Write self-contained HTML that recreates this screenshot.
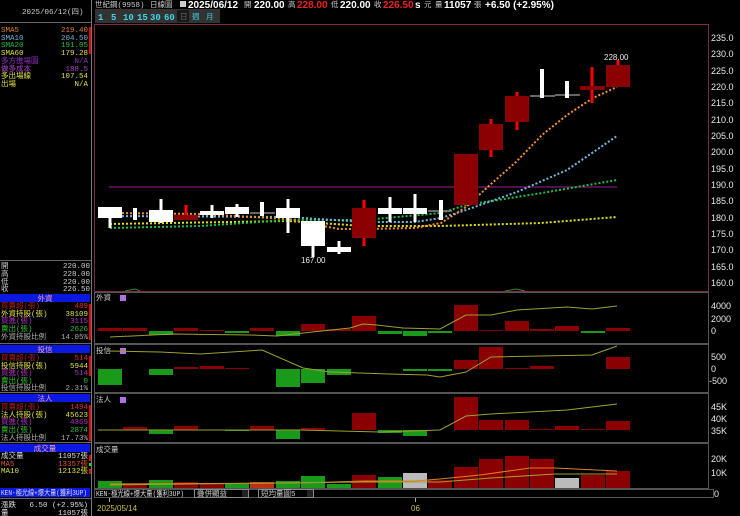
<!DOCTYPE html>
<html><head><meta charset="utf-8"><style>
html,body{margin:0;padding:0;background:#000;width:740px;height:516px;overflow:hidden}
svg{display:block}
text{font-family:"Liberation Mono","Noto Sans CJK TC",monospace;font-size:7.5px}
.b{font-family:"Liberation Sans","Noto Sans CJK TC",sans-serif;font-weight:bold;font-size:10px}
.ax{font-family:"Liberation Sans",sans-serif;font-size:9px;fill:#e8e8e8}
</style></head><body>
<svg width="740" height="516" viewBox="0 0 740 516" xmlns="http://www.w3.org/2000/svg">
<line x1="91.5" y1="0" x2="91.5" y2="516" stroke="#777"/>
<line x1="0" y1="22.5" x2="91" y2="22.5" stroke="#666"/>
<text x="22" y="14" fill="#ccc">2025/06/12(四)</text>
<g>
<text x="1" y="32" fill="#e08030">SMA5</text><text x="88" y="32" fill="#e08030" text-anchor="end">219.40</text>
<text x="1" y="40" fill="#70b8e0">SMA10</text><text x="88" y="40" fill="#70b8e0" text-anchor="end">204.50</text>
<text x="1" y="47" fill="#20c040">SMA20</text><text x="88" y="47" fill="#20c040" text-anchor="end">191.05</text>
<text x="1" y="55" fill="#e0e040">SMA60</text><text x="88" y="55" fill="#e0e040" text-anchor="end">179.28</text>
<text x="1" y="63" fill="#9030c0">多方進場圖</text><text x="88" y="63" fill="#9030c0" text-anchor="end">N/A</text>
<text x="1" y="71" fill="#b040d0">做多成本</text><text x="88" y="71" fill="#b040d0" text-anchor="end">188.5</text>
<text x="1" y="78" fill="#e0e040">多出場線</text><text x="88" y="78" fill="#e0e040" text-anchor="end">107.54</text>
<text x="1" y="86" fill="#e0e040">出場</text><text x="88" y="86" fill="#e0e040" text-anchor="end">N/A</text>
<rect x="89" y="27" width="2" height="27" fill="#e00"/>
</g>
<line x1="0" y1="260.5" x2="91" y2="260.5" stroke="#666"/>
<text x="1" y="268" fill="#ccc">開</text><text x="90" y="268" fill="#ccc" text-anchor="end">220.00</text>
<text x="1" y="276" fill="#ccc">高</text><text x="90" y="276" fill="#ccc" text-anchor="end">228.00</text>
<text x="1" y="284" fill="#ccc">低</text><text x="90" y="284" fill="#ccc" text-anchor="end">220.00</text>
<text x="1" y="291" fill="#ccc">收</text><text x="90" y="291" fill="#ccc" text-anchor="end">226.50</text>
<rect x="0" y="294" width="90" height="8" fill="#0a18e0"/><text x="45" y="301" fill="#f0a0a0" text-anchor="middle">外資</text>
<text x="1" y="308" fill="#b02020">買賣超(張)</text><text x="88" y="308" fill="#e03030" text-anchor="end">489</text>
<text x="1" y="316" fill="#e0e040">外資持股(張)</text><text x="88" y="316" fill="#e0e040" text-anchor="end">38109</text>
<text x="1" y="323" fill="#b030c0">買進(張)</text><text x="88" y="323" fill="#b030c0" text-anchor="end">3115</text>
<text x="1" y="331" fill="#30c030">賣出(張)</text><text x="88" y="331" fill="#30c030" text-anchor="end">2626</text>
<text x="1" y="339" fill="#aaa">外資持股比例</text><text x="88" y="339" fill="#aaa" text-anchor="end">14.05%</text>
<line x1="0" y1="343.5" x2="91" y2="343.5" stroke="#666"/>
<rect x="0" y="345" width="90" height="8" fill="#0a18e0"/><text x="45" y="352" fill="#f0a0a0" text-anchor="middle">投信</text>
<text x="1" y="360" fill="#b02020">買賣超(張)</text><text x="88" y="360" fill="#e03030" text-anchor="end">514</text>
<text x="1" y="368" fill="#e0e040">投信持股(張)</text><text x="88" y="368" fill="#e0e040" text-anchor="end">5944</text>
<text x="1" y="375" fill="#b030c0">買進(張)</text><text x="88" y="375" fill="#b030c0" text-anchor="end">514</text>
<text x="1" y="383" fill="#30c030">賣出(張)</text><text x="88" y="383" fill="#30c030" text-anchor="end">0</text>
<text x="1" y="390" fill="#aaa">投信持股比例</text><text x="88" y="390" fill="#aaa" text-anchor="end">2.31%</text>
<line x1="0" y1="392.5" x2="91" y2="392.5" stroke="#666"/>
<rect x="0" y="394" width="90" height="8" fill="#0a18e0"/><text x="45" y="401" fill="#f0a0a0" text-anchor="middle">法人</text>
<text x="1" y="409" fill="#b02020">買賣超(張)</text><text x="88" y="409" fill="#e03030" text-anchor="end">1494</text>
<text x="1" y="417" fill="#e0e040">法人持股(張)</text><text x="88" y="417" fill="#e0e040" text-anchor="end">45623</text>
<text x="1" y="424" fill="#b030c0">買進(張)</text><text x="88" y="424" fill="#b030c0" text-anchor="end">4369</text>
<text x="1" y="432" fill="#30c030">賣出(張)</text><text x="88" y="432" fill="#30c030" text-anchor="end">2874</text>
<text x="1" y="440" fill="#aaa">法人持股比例</text><text x="88" y="440" fill="#aaa" text-anchor="end">17.73%</text>
<line x1="0" y1="442.5" x2="91" y2="442.5" stroke="#666"/>
<rect x="0" y="444" width="90" height="8" fill="#0a18e0"/><text x="45" y="451" fill="#f0a0a0" text-anchor="middle">成交量</text>
<text x="1" y="458" fill="#ddd">成交量</text><text x="88" y="458" fill="#ddd" text-anchor="end">11057張</text>
<text x="1" y="466" fill="#e05030">MA5</text><text x="88" y="466" fill="#e05030" text-anchor="end">13357張</text>
<text x="1" y="473" fill="#e0e040">MA10</text><text x="88" y="473" fill="#e0e040" text-anchor="end">12132張</text>
<rect x="89" y="304" width="2" height="36" fill="#e00"/><rect x="89" y="356" width="2" height="20" fill="#e00"/><rect x="89" y="405" width="2" height="36" fill="#e00"/><rect x="89" y="455" width="2" height="6" fill="#e00"/><rect x="89" y="463" width="2" height="3" fill="#0e0"/><rect x="89" y="469" width="2" height="5" fill="#e00"/>
<rect x="0" y="488" width="90" height="9" fill="#0a18e0"/><text x="1" y="495" fill="#ddd" font-size="6.5" textLength="86" lengthAdjust="spacingAndGlyphs">KEN-極光線+爆大量(獲利3UP)</text>
<line x1="0" y1="498.5" x2="91" y2="498.5" stroke="#666"/>
<text x="1" y="507" fill="#ddd">漲跌</text><text x="88" y="507" fill="#ddd" text-anchor="end">6.50 (+2.95%)</text>
<text x="1" y="515" fill="#ddd">量</text><text x="88" y="515" fill="#ddd" text-anchor="end">11057張</text>

<text x="95" y="7" fill="#ccc">世紀鋼(9958)</text>
<text x="150" y="7" fill="#ccc">日線圖</text>
<rect x="180" y="1" width="6" height="6" fill="#ccc"/>
<text x="188" y="8" class="b" fill="#fff">2025/06/12</text>
<text x="244" y="7" fill="#ccc">開</text><text x="254" y="8" class="b" fill="#fff">220.00</text>
<text x="288" y="7" fill="#ccc">高</text><text x="297" y="8" class="b" fill="#f02020">228.00</text>
<text x="331" y="7" fill="#ccc">低</text><text x="340" y="8" class="b" fill="#fff">220.00</text>
<text x="374" y="7" fill="#ccc">收</text><text x="383" y="8" class="b" fill="#f02020">226.50</text>
<text x="415" y="8" class="b" fill="#fff" font-size="8">s</text><text x="424" y="7" fill="#ccc">元</text>
<text x="435" y="7" fill="#ccc">量</text><text x="444" y="8" class="b" fill="#fff">11057</text><text x="474" y="7" fill="#ccc">張</text>
<text x="485" y="8" class="b" fill="#fff">+6.50 (+2.95%)</text>
<rect x="95" y="9" width="125" height="14" fill="#333"/>
<g class="b" font-size="9" fill="#40d0e0">
<text x="98" y="20" style="font-size:9px">1</text><text x="111" y="20" style="font-size:9px">5</text><text x="123" y="20" style="font-size:9px">10</text><text x="137" y="20" style="font-size:9px">15</text><text x="150" y="20" style="font-size:9px">30</text><text x="164" y="20" style="font-size:9px">60</text>
</g>
<rect x="177" y="10" width="12" height="12" fill="#1a1a1a"/>
<text x="180" y="19" fill="#666">日</text><text x="192" y="19" fill="#40d0e0">週</text><text x="206" y="19" fill="#40d0e0">月</text>

<rect x="94.5" y="24.5" width="614" height="267" fill="none" stroke="#7a2a4a"/>
<g class="ax">
<text x="711" y="41" class="ax">235.0</text><text x="711" y="57" class="ax">230.0</text><text x="711" y="74" class="ax">225.0</text><text x="711" y="90" class="ax">220.0</text><text x="711" y="106" class="ax">215.0</text><text x="711" y="123" class="ax">210.0</text><text x="711" y="139" class="ax">205.0</text><text x="711" y="155" class="ax">200.0</text><text x="711" y="172" class="ax">195.0</text><text x="711" y="188" class="ax">190.0</text><text x="711" y="204" class="ax">185.0</text><text x="711" y="221" class="ax">180.0</text><text x="711" y="237" class="ax">175.0</text><text x="711" y="253" class="ax">170.0</text><text x="711" y="270" class="ax">165.0</text><text x="711" y="286" class="ax">160.0</text>
</g>
<line x1="109" y1="187" x2="617" y2="187" stroke="#a020a0"/>
<polyline points="110,224 288,221 364,226 441,226 541,223 617,217" fill="none" stroke="#e0e020" stroke-width="2" stroke-dasharray="2,2"/>
<polyline points="110,228 200,226 288,220 364,220 441,213 466,205 542,193 617,180" fill="none" stroke="#20c040" stroke-width="2" stroke-dasharray="2,2"/>
<polyline points="110,216 288,217 364,222 415,222 441,218 466,210 517,192 567,170 617,136" fill="none" stroke="#70b8e0" stroke-width="2" stroke-dasharray="2,2"/>
<polyline points="110,213 200,214 288,219 313,224 339,229 364,229 415,228 441,223 466,207 491,184 516,162 542,135 567,115 593,98 617,87" fill="none" stroke="#f09030" stroke-width="2" stroke-dasharray="2,2"/>
<g stroke="#fff" stroke-width="3">
<line x1="110" y1="207" x2="110" y2="228"/><line x1="161" y1="199" x2="161" y2="223"/><line x1="212" y1="205" x2="212" y2="218"/><line x1="237" y1="204" x2="237" y2="217"/><line x1="288" y1="199" x2="288" y2="233"/><line x1="313" y1="221" x2="313" y2="257"/><line x1="339" y1="241" x2="339" y2="254"/><line x1="390" y1="197" x2="390" y2="222"/><line x1="415" y1="194" x2="415" y2="222"/>
</g>
<g stroke="#888" stroke-width="1.5">
<line x1="250" y1="213" x2="275" y2="213"/><line x1="428" y1="211" x2="452" y2="211"/><line x1="530" y1="96" x2="555" y2="96"/><line x1="555" y1="95" x2="580" y2="95"/>
</g>
<g fill="#fff">
<rect x="98" y="207" width="24" height="11"/><rect x="133" y="208" width="4" height="12"/><rect x="149" y="210" width="24" height="12"/><rect x="200" y="211" width="24" height="4"/><rect x="225" y="207" width="24" height="7"/><rect x="260" y="202" width="4" height="14"/><rect x="276" y="208" width="24" height="10"/><rect x="301" y="221" width="24" height="25"/><rect x="327" y="247" width="24" height="5"/><rect x="378" y="208" width="24" height="6"/><rect x="403" y="208" width="24" height="6"/><rect x="439" y="200" width="4" height="20"/><rect x="540" y="69" width="4" height="29"/><rect x="565" y="81" width="4" height="17"/>
</g>
<g stroke="#f00" stroke-width="3">
<line x1="186" y1="205" x2="186" y2="220"/><line x1="364" y1="200" x2="364" y2="246"/><line x1="491" y1="119" x2="491" y2="157"/><line x1="517" y1="92" x2="517" y2="130"/><line x1="592" y1="67" x2="592" y2="103"/><line x1="618" y1="60" x2="618" y2="66"/>
</g>
<g fill="#8b0000">
<rect x="174" y="215" width="24" height="5"/><rect x="352" y="208" width="24" height="30"/><rect x="454" y="154" width="24" height="51"/><rect x="479" y="124" width="24" height="26"/><rect x="505" y="96" width="24" height="26"/><rect x="580" y="86" width="25" height="4"/><rect x="606" y="65" width="24" height="22"/>
</g>
<text x="604" y="60" class="ax" style="font-size:8px">228.00</text>
<text x="301" y="263" class="ax" style="font-size:8px">167.00</text>
<polyline points="125,291 135,289 140,291" fill="none" stroke="#2a8a2a"/>
<polyline points="505,291 516,289 525,291" fill="none" stroke="#2a8a2a"/>

<g fill="none" stroke="#555">
<rect x="94.5" y="292.5" width="614" height="51"/>
<rect x="94.5" y="344.5" width="614" height="48"/>
<rect x="94.5" y="393.5" width="614" height="49"/>
<rect x="94.5" y="443.5" width="614" height="45"/>
<rect x="94.5" y="489.5" width="619" height="8"/>
</g>
<text x="96" y="300" fill="#ccc">外資</text><rect x="120" y="295" width="6" height="6" fill="#b070e0"/>
<text x="96" y="353" fill="#ccc">投信</text><rect x="120" y="348" width="6" height="6" fill="#b070e0"/>
<text x="96" y="402" fill="#ccc">法人</text><rect x="120" y="397" width="6" height="6" fill="#b070e0"/>
<text x="96" y="452" fill="#ccc">成交量</text>
<g class="ax" style="font-size:8px">
<text x="711" y="309" class="ax">4000</text><text x="711" y="322" class="ax">2000</text><text x="711" y="334" class="ax">0</text>
<text x="711" y="360" class="ax">500</text><text x="711" y="372" class="ax">0</text><text x="709" y="384" class="ax">-500</text>
<text x="711" y="410" class="ax">45K</text><text x="711" y="422" class="ax">40K</text><text x="711" y="434" class="ax">35K</text>
<text x="711" y="462" class="ax">20K</text><text x="711" y="476" class="ax">10K</text><text x="714" y="497" class="ax">0</text>
</g>
<g fill="#8b0000">
<rect x="98" y="328" width="24" height="3"/><rect x="123" y="328" width="24" height="3"/><rect x="174" y="328" width="24" height="3"/><rect x="200" y="330" width="24" height="1"/><rect x="250" y="328" width="24" height="3"/><rect x="301" y="324" width="24" height="7"/><rect x="327" y="329" width="24" height="2"/><rect x="352" y="316" width="24" height="15"/><rect x="454" y="305" width="24" height="26"/><rect x="479" y="330" width="24" height="1"/><rect x="505" y="321" width="24" height="10"/><rect x="530" y="329" width="24" height="2"/><rect x="555" y="326" width="24" height="5"/><rect x="606" y="328" width="24" height="3"/>
</g>
<g fill="#1a9a1a">
<rect x="149" y="331" width="24" height="4"/><rect x="225" y="331" width="24" height="2"/><rect x="276" y="331" width="24" height="5"/><rect x="378" y="331" width="24" height="3"/><rect x="403" y="331" width="24" height="5"/><rect x="428" y="331" width="24" height="2"/><rect x="581" y="331" width="24" height="2"/>
</g>
<polyline points="110,337 173,334 250,335 277,336 303,333 350,328 363,324 377,325 403,328 440,329 466,315 491,315 517,310 567,307 592,309 617,306" fill="none" stroke="#a0a030"/>
<g fill="#1a9a1a">
<rect x="98" y="369" width="24" height="16"/><rect x="149" y="369" width="24" height="6"/><rect x="276" y="369" width="24" height="18"/><rect x="301" y="369" width="24" height="14"/><rect x="327" y="369" width="24" height="6"/><rect x="403" y="369" width="24" height="2"/><rect x="428" y="369" width="24" height="2"/>
</g>
<g fill="#8b0000">
<rect x="174" y="367" width="24" height="2"/><rect x="200" y="366" width="24" height="3"/><rect x="225" y="368" width="24" height="1"/><rect x="454" y="360" width="24" height="9"/><rect x="479" y="347" width="24" height="22"/><rect x="505" y="368" width="24" height="1"/><rect x="530" y="366" width="24" height="3"/><rect x="606" y="357" width="24" height="12"/>
</g>
<polyline points="110,351 160,352 200,354 262,350 262,350 303,368 330,372 390,374 427,375 440,377 466,372 491,357 592,355 617,346" fill="none" stroke="#a0a030"/>
<g fill="#8b0000">
<rect x="123" y="427" width="24" height="3"/><rect x="174" y="426" width="24" height="4"/><rect x="250" y="426" width="24" height="4"/><rect x="301" y="428" width="24" height="2"/><rect x="352" y="413" width="24" height="17"/><rect x="454" y="397" width="24" height="33"/><rect x="479" y="420" width="24" height="10"/><rect x="505" y="420" width="24" height="10"/><rect x="530" y="429" width="24" height="1"/><rect x="555" y="426" width="24" height="4"/><rect x="581" y="429" width="24" height="1"/><rect x="606" y="421" width="24" height="9"/>
</g>
<g fill="#1a9a1a">
<rect x="149" y="430" width="24" height="4"/><rect x="225" y="430" width="24" height="1"/><rect x="276" y="430" width="24" height="9"/><rect x="378" y="430" width="24" height="3"/><rect x="403" y="430" width="24" height="6"/>
</g>
<polyline points="98,430 300,430 380,432 440,430 466,416 491,414 567,410 617,404" fill="none" stroke="#a0a030"/>
<g fill="#1a9a1a">
<rect x="98" y="481" width="24" height="7"/><rect x="149" y="480" width="24" height="8"/><rect x="225" y="484" width="24" height="4"/><rect x="276" y="481" width="24" height="7"/><rect x="301" y="476" width="24" height="12"/><rect x="327" y="484" width="24" height="4"/><rect x="378" y="477" width="24" height="11"/>
</g>
<g fill="#8b0000">
<rect x="123" y="484" width="24" height="4"/><rect x="174" y="482" width="24" height="6"/><rect x="200" y="484" width="24" height="4"/><rect x="250" y="482" width="24" height="6" fill="#c03010"/><rect x="352" y="475" width="24" height="13"/><rect x="428" y="480" width="24" height="8"/><rect x="454" y="467" width="24" height="21"/><rect x="479" y="459" width="24" height="29"/><rect x="505" y="456" width="24" height="32"/><rect x="530" y="459" width="24" height="29"/><rect x="581" y="475" width="24" height="13"/><rect x="606" y="471" width="24" height="17"/>
</g>
<g fill="#bbb"><rect x="403" y="473" width="24" height="15"/><rect x="555" y="478" width="24" height="10"/></g>
<polyline points="110,484 300,483 364,481 415,481 440,479 480,475 530,468 555,468 617,471" fill="none" stroke="#e08020"/>
<polyline points="110,485 364,482 440,482 491,478 555,474 617,474" fill="none" stroke="#a0a030"/>
<text x="96" y="496" fill="#ddd" font-size="6.5" textLength="88" lengthAdjust="spacingAndGlyphs">KEN-極光線+爆大量(獲利3UP)</text>
<rect x="194.5" y="489.5" width="54" height="8" fill="#000" stroke="#888"/><text x="197" y="496" fill="#ccc" font-size="6.5">疊併顯益</text><rect x="242" y="490" width="6" height="7" fill="#222"/>
<rect x="258.5" y="489.5" width="55" height="8" fill="#000" stroke="#888"/><text x="261" y="496" fill="#ccc" font-size="6.5">短均量圖5</text><rect x="307" y="490" width="6" height="7" fill="#222"/>
<line x1="109.5" y1="498" x2="109.5" y2="502" stroke="#aaa"/><line x1="415.5" y1="498" x2="415.5" y2="502" stroke="#aaa"/>
<text x="97" y="511" class="ax" style="font-size:8px;fill:#d0c040">2025/05/14</text>
<text x="411" y="511" class="ax" style="font-size:8px;fill:#d0c040">06</text>
</svg>
</body></html>
